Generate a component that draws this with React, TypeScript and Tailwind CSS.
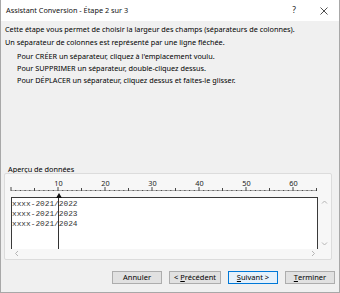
import React from "react";

const ui = { fontFamily: '"Noto Sans", "Open Sans", sans-serif' };
const mono = { fontFamily: '"Liberation Mono", "DejaVu Sans Mono", monospace' };

function Ruler() {
  const step = 4.7;
  const items: React.ReactNode[] = [];
  for (let i = 0; i <= 65; i++) {
    const x = 1 + i * step;
    let h = 1;
    if (i % 10 === 0) h = 4;
    else if (i % 5 === 0) h = 3;
    items.push(
      <line key={"t" + i} x1={x} x2={x} y1={11 - h + 1} y2={12} stroke="#333" strokeWidth={0.9} />
    );
    if (i % 10 === 0 && i > 0) {
      items.push(
        <text key={"n" + i} x={x + 0.5} y={7} fontSize={7.3} textAnchor="middle" fill="#222" fontFamily='"Noto Sans", sans-serif'>
          {i}
        </text>
      );
    }
  }
  return (
    <svg width={312} height={13} className="block">
      <line x1={1} x2={307} y1={11.5} y2={11.5} stroke="#777" strokeWidth={0.6} />
      {items}
    </svg>
  );
}

function Chevron({ dir }: { dir: "l" | "r" | "u" | "d" }) {
  const paths: Record<string, string> = {
    l: "M4 1 L1.5 3.5 L4 6",
    r: "M2 1 L4.5 3.5 L2 6",
    u: "M1 4.5 L3.5 2 L6 4.5",
    d: "M1 2.5 L3.5 5 L6 2.5",
  };
  return (
    <svg width={7} height={7} className="block">
      <path d={paths[dir]} fill="none" stroke="#b5b5b5" strokeWidth={1} />
    </svg>
  );
}

function Btn({ children, focused, w = "w-[50px]" }: { children: React.ReactNode; focused?: boolean; w?: string }) {
  return (
    <div
      className={
        "h-[13px] flex items-center justify-center text-[7.5px] leading-none text-black border " +
        w +
        " " +
        (focused ? "border-[#0078d7] bg-[#e5f1fb]" : "border-[#adadad] bg-[#e1e1e1]")
      }
    >
      {children}
    </div>
  );
}

export default function App() {
  return (
    <div
      className="w-[340px] h-[293px] bg-[#f0f0f0] border-x border-b border-[#a8a8a8] flex flex-col text-black overflow-hidden"
      style={ui}
    >
      {/* Title bar */}
      <div className="h-[21px] bg-white flex items-center pl-[5px] shrink-0">
        <span className="text-[7.3px] text-[#111] whitespace-nowrap">Assistant Conversion - Étape 2 sur 3</span>
        <div className="ml-auto flex">
          <div className="w-[30px] flex justify-center text-[8.5px] text-[#222]">?</div>
          <div className="w-[30px] flex justify-center items-center">
            <svg width={8} height={8}>
              <path d="M0.5 0.5 L7.5 7.5 M7.5 0.5 L0.5 7.5" stroke="#222" strokeWidth={0.8} />
            </svg>
          </div>
        </div>
      </div>

      {/* Description */}
      <div className="pl-[4px] mt-[1.5px] text-[7.3px] leading-[13px] whitespace-nowrap">
        <div>Cette étape vous permet de choisir la largeur des champs (séparateurs de colonnes).</div>
        <div>Un séparateur de colonnes est représenté par une ligne fléchée.</div>
      </div>
      <div className="pl-[16px] mt-[1.5px] text-[7.3px] leading-[12px] whitespace-nowrap">
        <div>Pour CRÉER un séparateur, cliquez à l'emplacement voulu.</div>
        <div>Pour SUPPRIMER un séparateur, double-cliquez dessus.</div>
        <div>Pour DÉPLACER un séparateur, cliquez dessus et faites-le glisser.</div>
      </div>

      {/* Group label */}
      <div className="mt-[78px] pl-[7px] text-[7.3px] leading-[10px] h-[10px]">
        <span className="underline">A</span>perçu de données
      </div>

      {/* Preview panel */}
      <div className="ml-[3px] mr-[7px] mt-[-1px] h-[87px] border border-[#dcdcdc] rounded-[2px] bg-[#f7f7f7] flex flex-col pl-[6px]">
        <div className="mt-[5px] ml-[-1px]">
          <Ruler />
        </div>
        <div className="flex mt-[5px]">
          <div className="relative w-[307px] h-[52px] bg-white border-l border-t border-r border-[#3a3a3a]">
            <div className="pt-[0.5px] text-[7.8px] leading-[10px] text-[#333]" style={mono}>
              <div>xxxx-2021/2022</div>
              <div>xxxx-2021/2023</div>
              <div>xxxx-2021/2024</div>
            </div>
            <div className="absolute left-[46px] top-0 bottom-0 w-px bg-[#333]" />
            <svg width={6} height={5} className="absolute left-[43.5px] top-[-5px]">
              <path d="M3 0 L6 5 L0 5 Z" fill="#111" />
            </svg>
          </div>
          <div className="w-[11px] flex flex-col items-center justify-between py-[2px] pl-[1px]">
            <Chevron dir="u" />
            <Chevron dir="d" />
          </div>
        </div>
        <div className="flex items-center justify-between w-[309px] h-[9px] px-[3px]">
          <Chevron dir="l" />
          <Chevron dir="r" />
        </div>
      </div>

      {/* Buttons */}
      <div className="mt-[11px] flex justify-end gap-[7px] pr-[4px]">
        <Btn>Annuler</Btn>
        <Btn w="w-[52px]">
          &lt; <span className="underline ml-[2px]">P</span>récédent
        </Btn>
        <Btn focused>
          <span className="underline">S</span>uivant &gt;
        </Btn>
        <Btn>
          <span className="underline">T</span>erminer
        </Btn>
      </div>
    </div>
  );
}
